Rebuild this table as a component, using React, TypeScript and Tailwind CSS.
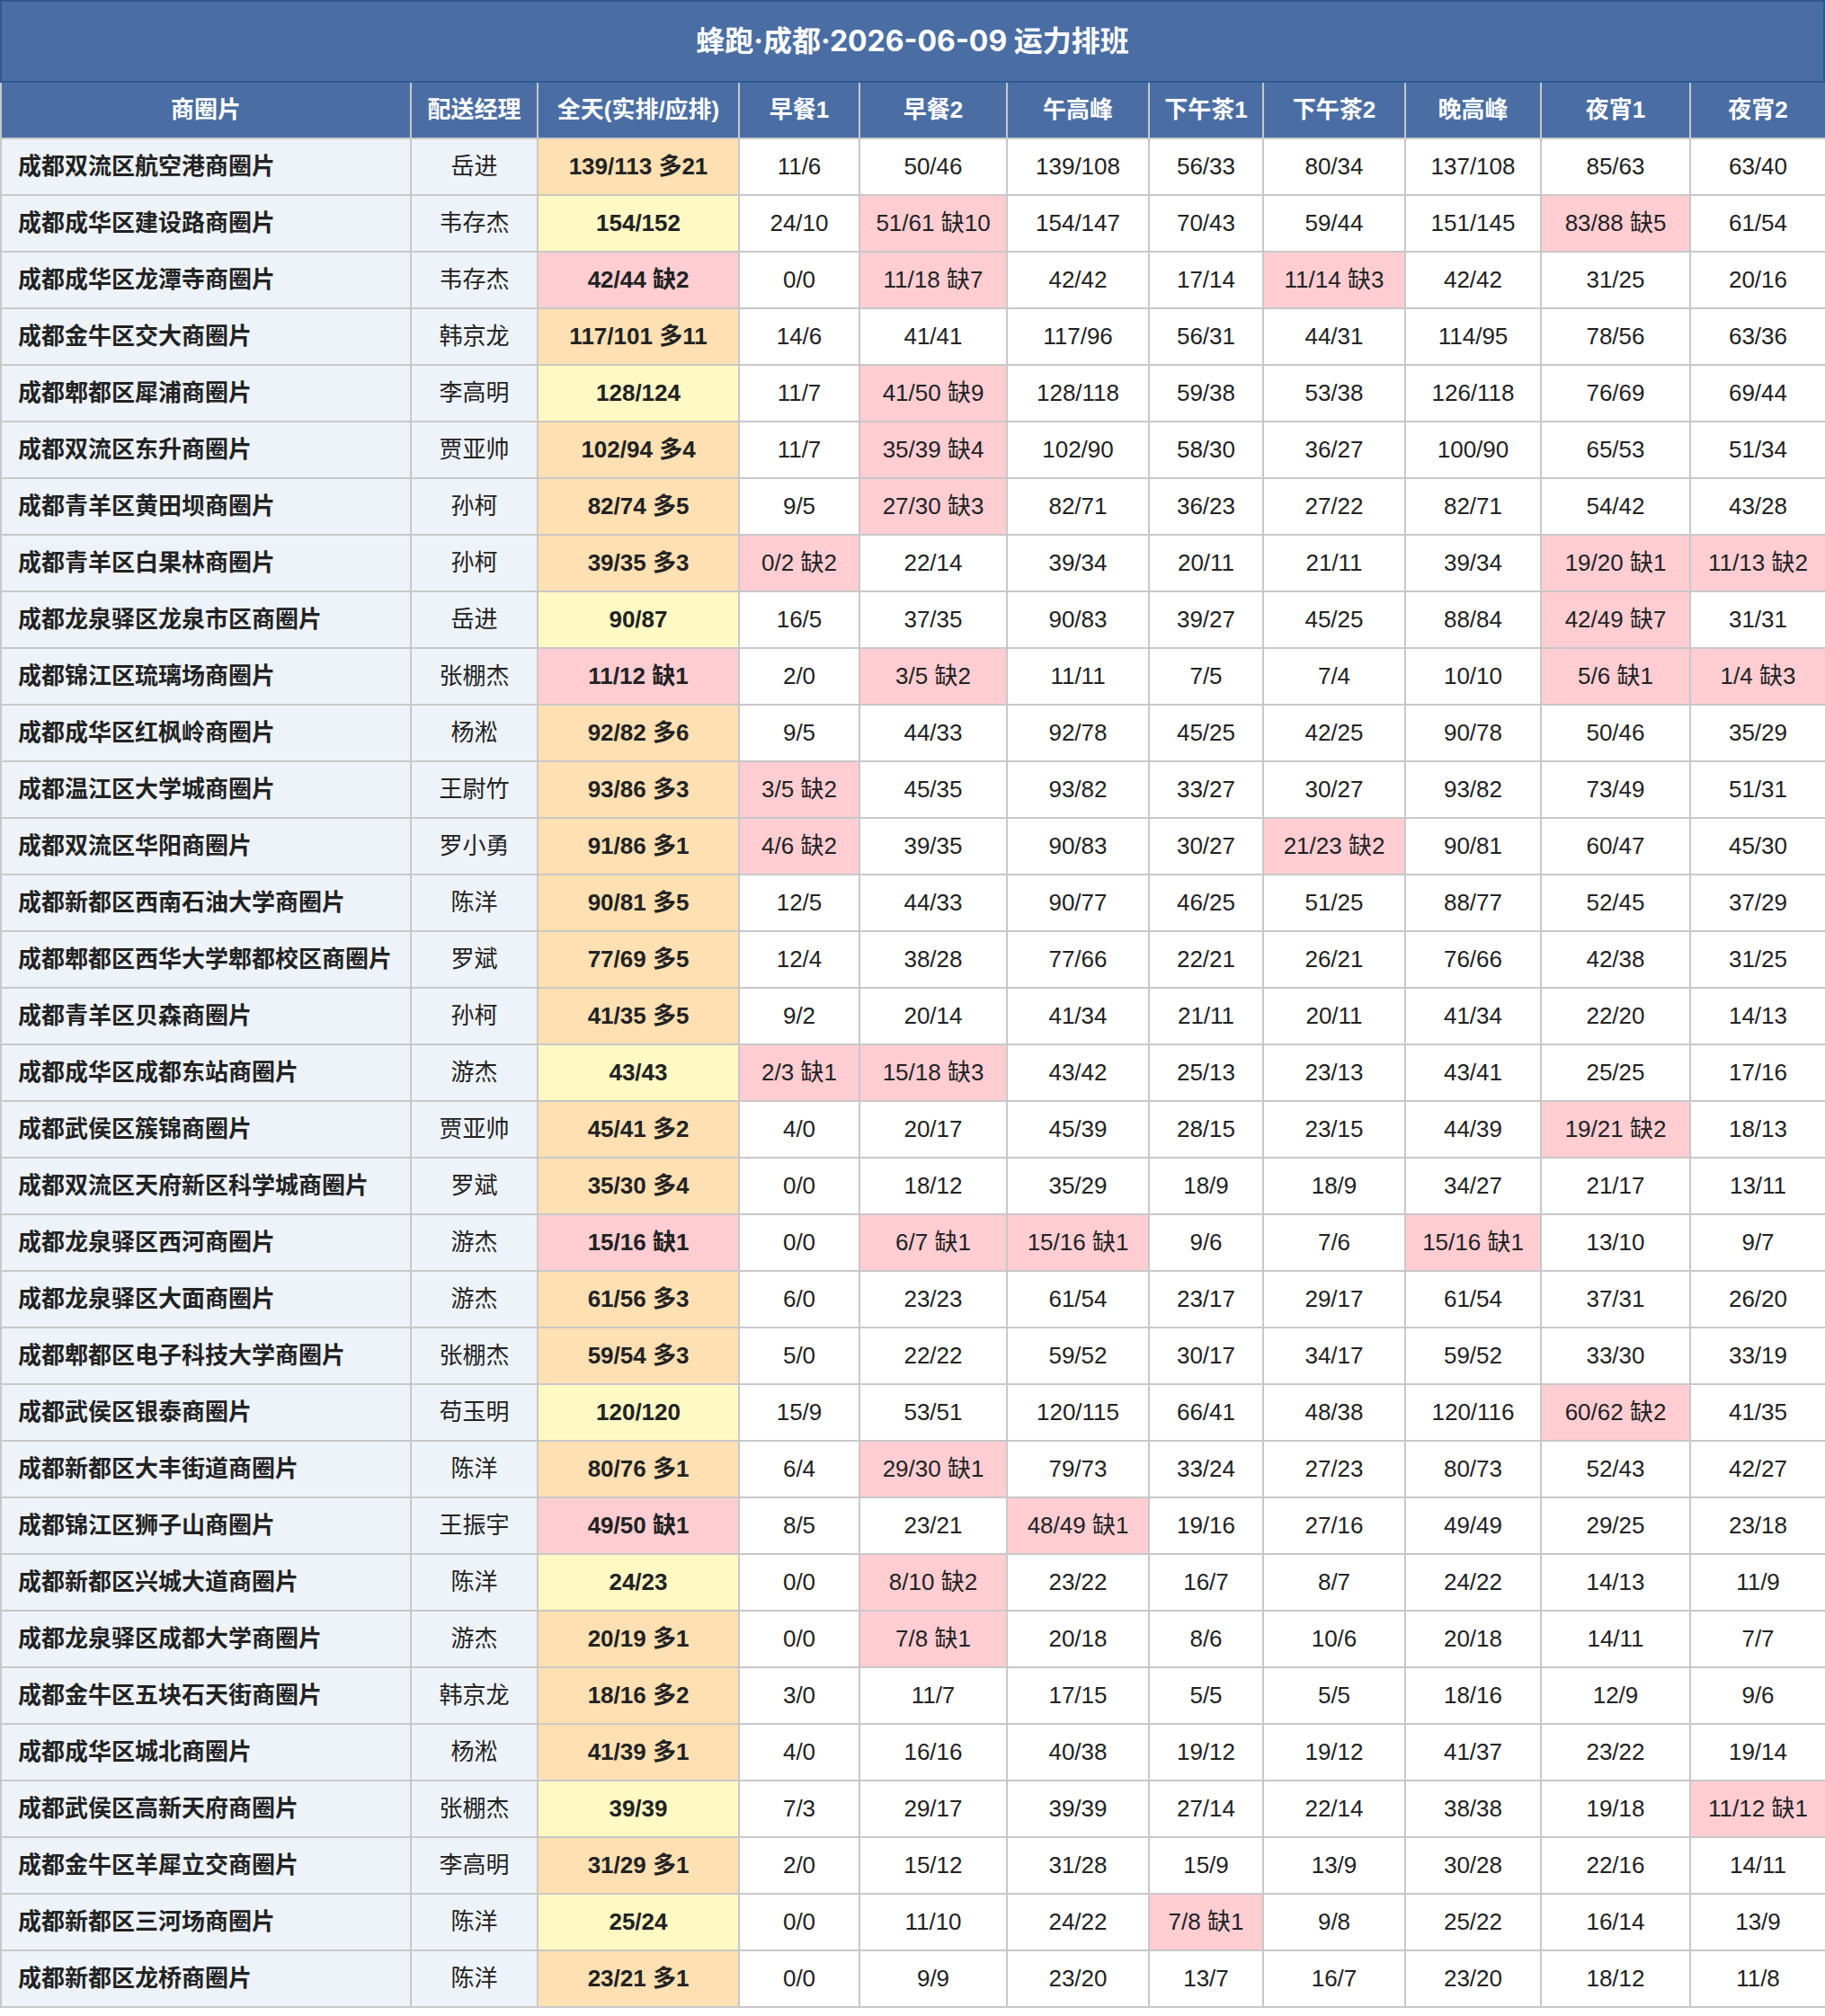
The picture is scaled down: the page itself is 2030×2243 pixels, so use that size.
const rows: string[][] = [
  ["成都双流区航空港商圈片", "岳进", "139/113 多21", "11/6", "50/46", "139/108", "56/33", "80/34", "137/108", "85/63", "63/40"],
  ["成都成华区建设路商圈片", "韦存杰", "154/152", "24/10", "51/61 缺10", "154/147", "70/43", "59/44", "151/145", "83/88 缺5", "61/54"],
  ["成都成华区龙潭寺商圈片", "韦存杰", "42/44 缺2", "0/0", "11/18 缺7", "42/42", "17/14", "11/14 缺3", "42/42", "31/25", "20/16"],
  ["成都金牛区交大商圈片", "韩京龙", "117/101 多11", "14/6", "41/41", "117/96", "56/31", "44/31", "114/95", "78/56", "63/36"],
  ["成都郫都区犀浦商圈片", "李高明", "128/124", "11/7", "41/50 缺9", "128/118", "59/38", "53/38", "126/118", "76/69", "69/44"],
  ["成都双流区东升商圈片", "贾亚帅", "102/94 多4", "11/7", "35/39 缺4", "102/90", "58/30", "36/27", "100/90", "65/53", "51/34"],
  ["成都青羊区黄田坝商圈片", "孙柯", "82/74 多5", "9/5", "27/30 缺3", "82/71", "36/23", "27/22", "82/71", "54/42", "43/28"],
  ["成都青羊区白果林商圈片", "孙柯", "39/35 多3", "0/2 缺2", "22/14", "39/34", "20/11", "21/11", "39/34", "19/20 缺1", "11/13 缺2"],
  ["成都龙泉驿区龙泉市区商圈片", "岳进", "90/87", "16/5", "37/35", "90/83", "39/27", "45/25", "88/84", "42/49 缺7", "31/31"],
  ["成都锦江区琉璃场商圈片", "张棚杰", "11/12 缺1", "2/0", "3/5 缺2", "11/11", "7/5", "7/4", "10/10", "5/6 缺1", "1/4 缺3"],
  ["成都成华区红枫岭商圈片", "杨淞", "92/82 多6", "9/5", "44/33", "92/78", "45/25", "42/25", "90/78", "50/46", "35/29"],
  ["成都温江区大学城商圈片", "王尉竹", "93/86 多3", "3/5 缺2", "45/35", "93/82", "33/27", "30/27", "93/82", "73/49", "51/31"],
  ["成都双流区华阳商圈片", "罗小勇", "91/86 多1", "4/6 缺2", "39/35", "90/83", "30/27", "21/23 缺2", "90/81", "60/47", "45/30"],
  ["成都新都区西南石油大学商圈片", "陈洋", "90/81 多5", "12/5", "44/33", "90/77", "46/25", "51/25", "88/77", "52/45", "37/29"],
  ["成都郫都区西华大学郫都校区商圈片", "罗斌", "77/69 多5", "12/4", "38/28", "77/66", "22/21", "26/21", "76/66", "42/38", "31/25"],
  ["成都青羊区贝森商圈片", "孙柯", "41/35 多5", "9/2", "20/14", "41/34", "21/11", "20/11", "41/34", "22/20", "14/13"],
  ["成都成华区成都东站商圈片", "游杰", "43/43", "2/3 缺1", "15/18 缺3", "43/42", "25/13", "23/13", "43/41", "25/25", "17/16"],
  ["成都武侯区簇锦商圈片", "贾亚帅", "45/41 多2", "4/0", "20/17", "45/39", "28/15", "23/15", "44/39", "19/21 缺2", "18/13"],
  ["成都双流区天府新区科学城商圈片", "罗斌", "35/30 多4", "0/0", "18/12", "35/29", "18/9", "18/9", "34/27", "21/17", "13/11"],
  ["成都龙泉驿区西河商圈片", "游杰", "15/16 缺1", "0/0", "6/7 缺1", "15/16 缺1", "9/6", "7/6", "15/16 缺1", "13/10", "9/7"],
  ["成都龙泉驿区大面商圈片", "游杰", "61/56 多3", "6/0", "23/23", "61/54", "23/17", "29/17", "61/54", "37/31", "26/20"],
  ["成都郫都区电子科技大学商圈片", "张棚杰", "59/54 多3", "5/0", "22/22", "59/52", "30/17", "34/17", "59/52", "33/30", "33/19"],
  ["成都武侯区银泰商圈片", "苟玉明", "120/120", "15/9", "53/51", "120/115", "66/41", "48/38", "120/116", "60/62 缺2", "41/35"],
  ["成都新都区大丰街道商圈片", "陈洋", "80/76 多1", "6/4", "29/30 缺1", "79/73", "33/24", "27/23", "80/73", "52/43", "42/27"],
  ["成都锦江区狮子山商圈片", "王振宇", "49/50 缺1", "8/5", "23/21", "48/49 缺1", "19/16", "27/16", "49/49", "29/25", "23/18"],
  ["成都新都区兴城大道商圈片", "陈洋", "24/23", "0/0", "8/10 缺2", "23/22", "16/7", "8/7", "24/22", "14/13", "11/9"],
  ["成都龙泉驿区成都大学商圈片", "游杰", "20/19 多1", "0/0", "7/8 缺1", "20/18", "8/6", "10/6", "20/18", "14/11", "7/7"],
  ["成都金牛区五块石天街商圈片", "韩京龙", "18/16 多2", "3/0", "11/7", "17/15", "5/5", "5/5", "18/16", "12/9", "9/6"],
  ["成都成华区城北商圈片", "杨淞", "41/39 多1", "4/0", "16/16", "40/38", "19/12", "19/12", "41/37", "23/22", "19/14"],
  ["成都武侯区高新天府商圈片", "张棚杰", "39/39", "7/3", "29/17", "39/39", "27/14", "22/14", "38/38", "19/18", "11/12 缺1"],
  ["成都金牛区羊犀立交商圈片", "李高明", "31/29 多1", "2/0", "15/12", "31/28", "15/9", "13/9", "30/28", "22/16", "14/11"],
  ["成都新都区三河场商圈片", "陈洋", "25/24", "0/0", "11/10", "24/22", "7/8 缺1", "9/8", "25/22", "16/14", "13/9"],
  ["成都新都区龙桥商圈片", "陈洋", "23/21 多1", "0/0", "9/9", "23/20", "13/7", "16/7", "23/20", "18/12", "11/8"],
];

const columns = [
  { label: "商圈片", width: "w-[456px]" },
  { label: "配送经理", width: "w-[141px]" },
  { label: "全天(实排/应排)", width: "w-[224px]" },
  { label: "早餐1", width: "w-[134px]" },
  { label: "早餐2", width: "w-[164px]" },
  { label: "午高峰", width: "w-[158px]" },
  { label: "下午茶1", width: "w-[127px]" },
  { label: "下午茶2", width: "w-[158px]" },
  { label: "晚高峰", width: "w-[151px]" },
  { label: "夜宵1", width: "w-[166px]" },
  { label: "夜宵2", width: "w-[151px]" },
];

// colour of a slot cell from its label
const cellBg = (text: string, col: number) => {
  if (text.includes("缺")) return "bg-[#ffcdd2]";
  if (col === 2) return text.includes("多") ? "bg-[#ffe0b2]" : "bg-[#fff9c4]";
  return "bg-white";
};

const cellClass = (text: string, col: number) => {
  if (col === 0) return "bg-[#eef3fa] font-bold text-left pl-[18px]";
  if (col === 1) return "bg-[#eef3fa] text-center";
  if (col === 2) return `${cellBg(text, col)} font-bold text-center`;
  return `${cellBg(text, col)} text-center`;
};

export default function App() {
  return (
    <div className="w-[2030px] bg-white text-[#222] font-['Liberation_Sans','Noto_Sans_CJK_SC',sans-serif]">
      <div className="h-[92px] flex items-center justify-center bg-[#4a6ea4] border-2 border-[#2e5a94] text-white font-bold text-[32px] font-['Inter','Noto_Sans_CJK_SC',sans-serif]">
        蜂跑·成都·2026-06-09 运力排班
      </div>
      <table className="w-[2030px] table-fixed border-collapse">
        <thead>
          <tr>
            {columns.map((c) => (
              <th
                key={c.label}
                className={`${c.width} h-[62px] p-0 bg-[#4a6ea4] text-white font-bold text-[26px] text-center border-2 border-[#c8c8c8] border-t-0`}
              >
                {c.label}
              </th>
            ))}
          </tr>
        </thead>
        <tbody>
          {rows.map((r, ri) => (
            <tr key={ri}>
              {r.map((c, ci) => (
                <td
                  key={ci}
                  className={`h-[63px] p-0 text-[26px] border-2 border-[#c8c8c8] whitespace-nowrap ${cellClass(c, ci)}`}
                >
                  {c}
                </td>
              ))}
            </tr>
          ))}
        </tbody>
      </table>
    </div>
  );
}
